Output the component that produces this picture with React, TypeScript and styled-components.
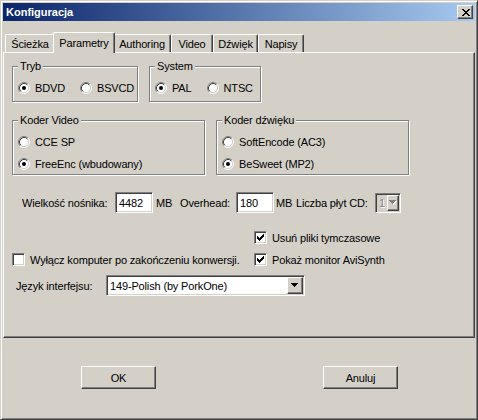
import React from 'react';
import styled, { createGlobalStyle, css } from 'styled-components';

const GlobalStyle = createGlobalStyle`
    html, body {
        margin: 0;
        padding: 0;
        background: #d4d0c8;
    }
    body {
        font-family: 'Liberation Sans', Arial, sans-serif;
        font-size: 11px;
        letter-spacing: -0.15px;
        color: #000;
    }
    * {
        box-sizing: border-box;
    }
`;

const raised = css`
    border: 1px solid;
    border-color: #fff #404040 #404040 #fff;
    box-shadow: inset -1px -1px 0 #808080, inset 1px 1px 0 #d4d0c8;
    background: #d4d0c8;
`;

const sunken = css`
    border: 1px solid;
    border-color: #808080 #fff #fff #808080;
    box-shadow: inset 1px 1px 0 #404040, inset -1px -1px 0 #d4d0c8;
`;

const WindowStyle = styled.div`
    width: 478px;
    height: 420px;
    background: #d4d0c8;
    border: 1px solid;
    border-color: #d4d0c8 #404040 #404040 #d4d0c8;
    box-shadow: inset 1px 1px 0 #fff, inset -1px -1px 0 #808080;
    padding: 2px;
    display: flex;
    flex-direction: column;
`;

const TitleBarStyle = styled.div`
    height: 18px;
    flex: 0 0 18px;
    display: flex;
    align-items: center;
    justify-content: space-between;
    padding: 0 2px 0 3px;
    background: linear-gradient(to right, #0a246a, #a6caf0);
`;

const TitleTextStyle = styled.span`
    color: #fff;
    font-weight: bold;
    font-size: 11px;
    letter-spacing: 0;
`;

const CloseButtonStyle = styled.div`
    ${raised};
    width: 16px;
    height: 14px;
    display: flex;
    align-items: center;
    justify-content: center;
    padding-left: 1px;
`;

const TabStripStyle = styled.div`
    height: 20px;
    margin-top: 11px;
    padding-left: 2px;
    display: flex;
    align-items: flex-end;
`;

const TabStyle = styled.div<{ $active?: boolean; $w: number }>`
    width: ${(p) => p.$w + (p.$active ? 4 : 0)}px;
    height: ${(p) => (p.$active ? 21 : 18)}px;
    margin: 0 ${(p) => (p.$active ? -2 : 0)}px ${(p) => (p.$active ? -1 : 0)}px;
    position: relative;
    z-index: ${(p) => (p.$active ? 1 : 0)};
    display: flex;
    align-items: center;
    justify-content: center;
    padding-bottom: ${(p) => (p.$active ? 1 : 0)}px;
    background: #d4d0c8;
    border-top: 1px solid #fff;
    border-left: 1px solid #fff;
    border-right: 1px solid #404040;
    box-shadow: inset -1px 0 0 #808080;
    border-radius: 2px 2px 0 0;
    white-space: nowrap;
`;

const PanelStyle = styled.div`
    height: 286px;
    flex: 0 0 286px;
    border: 1px solid;
    border-color: #fff #404040 #404040 #fff;
    box-shadow: inset -1px -1px 0 #808080;
    display: flex;
    flex-direction: column;
`;

const GroupRowStyle = styled.div<{ $mt: number }>`
    display: flex;
    gap: 11px;
    margin-top: ${(p) => p.$mt}px;
    padding-left: 8px;
`;

const GroupBoxStyle = styled.div<{ $w: number; $h: number }>`
    width: ${(p) => p.$w}px;
    height: ${(p) => p.$h}px;
    border: 1px solid #808080;
    box-shadow: inset 1px 1px 0 #fff, 1px 1px 0 #fff;
    padding: 0 0 0 5px;
    display: flex;
    flex-direction: column;
`;

const GroupCaptionStyle = styled.span`
    display: block;
    width: fit-content;
    margin-top: -7px;
    padding: 0 2px;
    line-height: 13px;
    background: #d4d0c8;
`;

const OptionRowStyle = styled.div<{ $mt: number }>`
    display: flex;
    align-items: center;
    gap: 15px;
    height: 12px;
    margin-top: ${(p) => p.$mt}px;
`;

const OptionStyle = styled.label`
    display: flex;
    align-items: center;
    gap: 5px;
    white-space: nowrap;
    line-height: 12px;

    svg {
        flex: 0 0 12px;
    }
`;

const FieldRowStyle = styled.div`
    display: flex;
    align-items: center;
    height: 21px;
    margin-top: 17px;
    padding-left: 18px;
`;

const CellTextStyle = styled.span<{ $w: number; $ml?: number }>`
    width: ${(p) => p.$w}px;
    margin-left: ${(p) => p.$ml ?? 0}px;
    white-space: nowrap;
`;

const EditBoxStyle = styled.div<{ $w: number }>`
    ${sunken};
    width: ${(p) => p.$w}px;
    height: 21px;
    background: #fff;
    padding: 0 3px;
    display: flex;
    align-items: center;
`;

const DisabledComboStyle = styled.div`
    ${sunken};
    width: 26px;
    height: 20px;
    background: #d4d0c8;
    display: flex;
    align-items: center;
    justify-content: space-between;
    padding: 0 1px 0 3px;
    color: #808080;
    text-shadow: 1px 1px 0 #fff;
`;

const DropButtonStyle = styled.div<{ $w: number; $h: number }>`
    ${raised};
    width: ${(p) => p.$w}px;
    height: ${(p) => p.$h}px;
    display: flex;
    align-items: center;
    justify-content: center;
`;

const CheckGridStyle = styled.div`
    display: grid;
    grid-template-columns: 242px auto;
    grid-auto-rows: 13px;
    row-gap: 9px;
    margin-top: 18px;
    padding-left: 8px;
`;

const CheckOptionStyle = styled.label<{ $col: number }>`
    grid-column: ${(p) => p.$col};
    display: flex;
    align-items: center;
    gap: 5px;
    white-space: nowrap;
`;

const CheckBoxStyle = styled.span`
    ${sunken};
    width: 13px;
    height: 13px;
    flex: 0 0 13px;
    background: #fff;
    display: flex;
    align-items: center;
    justify-content: center;
`;

const LanguageRowStyle = styled.div`
    display: flex;
    align-items: center;
    margin-top: 9px;
    padding-left: 12px;
`;

const SelectStyle = styled.div`
    ${sunken};
    width: 199px;
    height: 21px;
    background: #fff;
    display: flex;
    align-items: center;
    justify-content: space-between;
    padding: 0 1px 0 3px;
`;

const ButtonRowStyle = styled.div`
    display: flex;
    justify-content: space-between;
    margin-top: 28px;
    padding: 0 77px 0 78px;
`;

const PushButtonStyle = styled.div`
    ${raised};
    width: 75px;
    height: 23px;
    display: flex;
    align-items: center;
    justify-content: center;
`;

const Radio: React.FC<{ checked?: boolean }> = ({ checked }) => (
    <svg width="12" height="12" viewBox="0 0 12 12">
        <circle cx="6" cy="6" r="4.5" fill="#fff" />
        <path d="M2.11 9.89A5.5 5.5 0 0 1 9.89 2.11" fill="none" stroke="#808080" />
        <path d="M9.89 2.11A5.5 5.5 0 0 1 2.11 9.89" fill="none" stroke="#fff" />
        <path d="M2.82 9.18A4.5 4.5 0 0 1 9.18 2.82" fill="none" stroke="#404040" />
        <path d="M9.18 2.82A4.5 4.5 0 0 1 2.82 9.18" fill="none" stroke="#d4d0c8" />
        {checked && <circle cx="6" cy="6" r="2" fill="#000" />}
    </svg>
);

const CheckMark = () => (
    <svg width="7" height="7" viewBox="0 0 7 7">
        <path
            d="M0 2h1v3H0z M1 3h1v3H1z M2 4h1v3H2z M3 3h1v3H3z M4 2h1v3H4z M5 1h1v3H5z M6 0h1v3H6z"
            fill="#000"
        />
    </svg>
);

const CloseGlyph = () => (
    <svg width="8" height="7" viewBox="0 0 8 7">
        <path
            d="M0 0h2v1H0z M6 0h2v1H6z M1 1h2v1H1z M5 1h2v1H5z M2 2h4v1H2z M3 3h2v1H3z M2 4h4v1H2z M1 5h2v1H1z M5 5h2v1H5z M0 6h2v1H0z M6 6h2v1H6z"
            fill="#000"
        />
    </svg>
);

const DownArrow: React.FC<{ disabled?: boolean }> = ({ disabled }) => (
    <svg width="8" height="5" viewBox="0 0 8 5">
        {disabled && <path d="M1 1h7v1H1z M2 2h5v1H2z M3 3h3v1H3z M4 4h1v1H4z" fill="#fff" />}
        <path d="M0 0h7v1H0z M1 1h5v1H1z M2 2h3v1H2z M3 3h1v1H3z" fill={disabled ? '#808080' : '#000'} />
    </svg>
);

const Check: React.FC<{ col: number; checked?: boolean; children: React.ReactNode }> = ({ col, checked, children }) => (
    <CheckOptionStyle $col={col}>
        <CheckBoxStyle>{checked && <CheckMark />}</CheckBoxStyle>
        {children}
    </CheckOptionStyle>
);

const tabs = [
    { name: 'Ścieżka', w: 50 },
    { name: 'Parametry', w: 58, active: true },
    { name: 'Authoring', w: 58 },
    { name: 'Video', w: 42 },
    { name: 'Dźwięk', w: 45 },
    { name: 'Napisy', w: 46 },
];

const App: React.FC = () => {
    return (
        <>
            <GlobalStyle />
            <WindowStyle>
                <TitleBarStyle>
                    <TitleTextStyle>Konfiguracja</TitleTextStyle>
                    <CloseButtonStyle>
                        <CloseGlyph />
                    </CloseButtonStyle>
                </TitleBarStyle>

                <TabStripStyle>
                    {tabs.map((t) => (
                        <TabStyle key={t.name} $w={t.w} $active={t.active}>
                            {t.name}
                        </TabStyle>
                    ))}
                </TabStripStyle>

                <PanelStyle>
                    <GroupRowStyle $mt={13}>
                        <GroupBoxStyle $w={126} $h={36}>
                            <GroupCaptionStyle>Tryb</GroupCaptionStyle>
                            <OptionRowStyle $mt={9}>
                                <OptionStyle>
                                    <Radio checked /> BDVD
                                </OptionStyle>
                                <OptionStyle>
                                    <Radio /> BSVCD
                                </OptionStyle>
                            </OptionRowStyle>
                        </GroupBoxStyle>
                        <GroupBoxStyle $w={112} $h={36}>
                            <GroupCaptionStyle>System</GroupCaptionStyle>
                            <OptionRowStyle $mt={9}>
                                <OptionStyle>
                                    <Radio checked /> PAL
                                </OptionStyle>
                                <OptionStyle>
                                    <Radio /> NTSC
                                </OptionStyle>
                            </OptionRowStyle>
                        </GroupBoxStyle>
                    </GroupRowStyle>

                    <GroupRowStyle $mt={18}>
                        <GroupBoxStyle $w={193} $h={55}>
                            <GroupCaptionStyle>Koder Video</GroupCaptionStyle>
                            <OptionRowStyle $mt={9}>
                                <OptionStyle>
                                    <Radio /> CCE SP
                                </OptionStyle>
                            </OptionRowStyle>
                            <OptionRowStyle $mt={10}>
                                <OptionStyle>
                                    <Radio checked /> FreeEnc (wbudowany)
                                </OptionStyle>
                            </OptionRowStyle>
                        </GroupBoxStyle>
                        <GroupBoxStyle $w={193} $h={55}>
                            <GroupCaptionStyle>Koder dźwięku</GroupCaptionStyle>
                            <OptionRowStyle $mt={9}>
                                <OptionStyle>
                                    <Radio /> SoftEncode (AC3)
                                </OptionStyle>
                            </OptionRowStyle>
                            <OptionRowStyle $mt={10}>
                                <OptionStyle>
                                    <Radio checked /> BeSweet (MP2)
                                </OptionStyle>
                            </OptionRowStyle>
                        </GroupBoxStyle>
                    </GroupRowStyle>

                    <FieldRowStyle>
                        <CellTextStyle $w={93}>Wielkość nośnika:</CellTextStyle>
                        <EditBoxStyle $w={38}>4482</EditBoxStyle>
                        <CellTextStyle $w={24} $ml={3}>
                            MB
                        </CellTextStyle>
                        <CellTextStyle $w={56}>Overhead:</CellTextStyle>
                        <EditBoxStyle $w={38}>180</EditBoxStyle>
                        <CellTextStyle $w={20} $ml={2}>
                            MB
                        </CellTextStyle>
                        <CellTextStyle $w={79}>Liczba płyt CD:</CellTextStyle>
                        <DisabledComboStyle>
                            1
                            <DropButtonStyle $w={12} $h={16}>
                                <DownArrow disabled />
                            </DropButtonStyle>
                        </DisabledComboStyle>
                    </FieldRowStyle>

                    <CheckGridStyle>
                        <Check col={2} checked>
                            Usuń pliki tymczasowe
                        </Check>
                        <Check col={1}>Wyłącz komputer po zakończeniu konwersji.</Check>
                        <Check col={2} checked>
                            Pokaż monitor AviSynth
                        </Check>
                    </CheckGridStyle>

                    <LanguageRowStyle>
                        <CellTextStyle $w={90}>Język interfejsu:</CellTextStyle>
                        <SelectStyle>
                            149-Polish (by PorkOne)
                            <DropButtonStyle $w={16} $h={17}>
                                <DownArrow />
                            </DropButtonStyle>
                        </SelectStyle>
                    </LanguageRowStyle>
                </PanelStyle>

                <ButtonRowStyle>
                    <PushButtonStyle>OK</PushButtonStyle>
                    <PushButtonStyle>Anuluj</PushButtonStyle>
                </ButtonRowStyle>
            </WindowStyle>
        </>
    );
};

export default App;
